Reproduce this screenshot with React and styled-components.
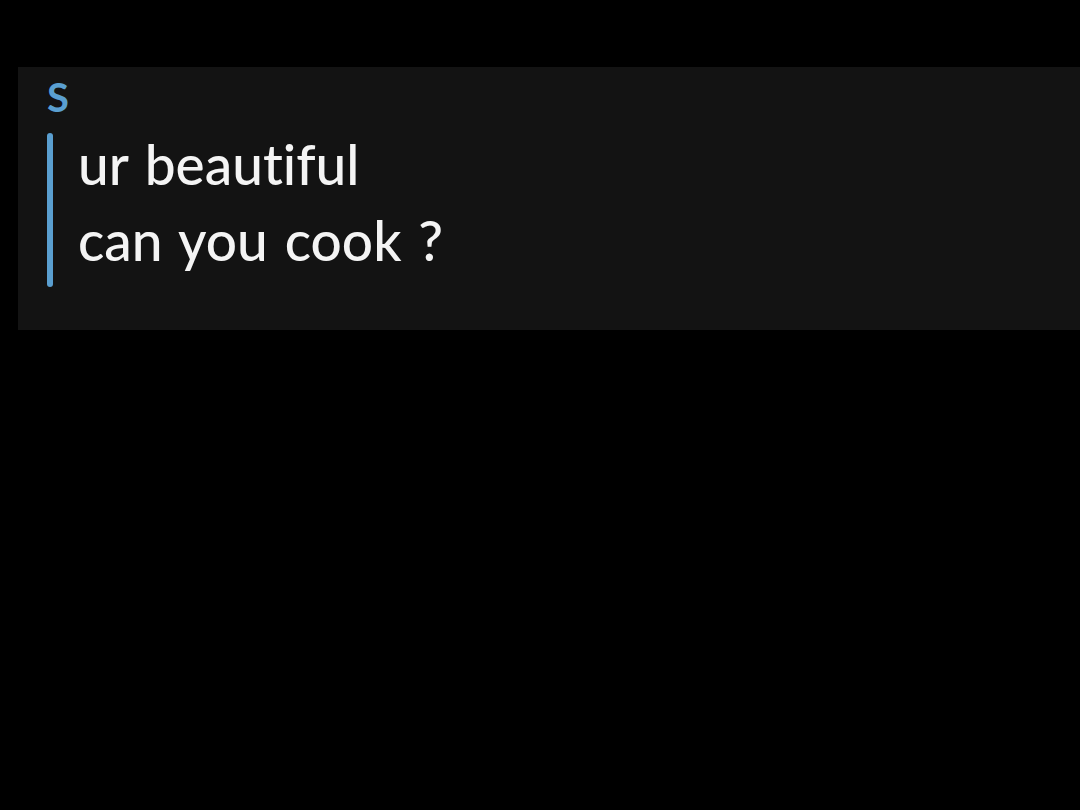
import React from "react";
import styled, { createGlobalStyle } from "styled-components";

const Global = createGlobalStyle`
  html, body {
    margin: 0;
    padding: 0;
    background: #000;
  }
  body {
    width: 1080px;
    height: 810px;
    overflow: hidden;
    font-family: "Lato", "Noto Sans", sans-serif;
  }
`;

const Screen = styled.div`
  width: 1080px;
  height: 810px;
  background: #000;
  padding-top: 67px;
  padding-left: 18px;
  box-sizing: border-box;
`;

const Chat = styled.section`
  height: 263px;
  background: #131313;
  box-sizing: border-box;
  padding: 10px 0 0 29px;
  display: flex;
  flex-direction: column;
`;

const Sender = styled.div`
  color: ${(p) => p.$color};
  font-family: "Lato", sans-serif;
  font-weight: 700;
  font-size: 40px;
  line-height: 40px;
  height: 40px;
`;

const Thread = styled.div`
  display: flex;
  gap: 25px;
  margin-top: 16px;
`;

const Bar = styled.div`
  width: 6px;
  height: 154px;
  border-radius: 3px;
  background: ${(p) => p.$color};
`;

const Lines = styled.div`
  display: flex;
  flex-direction: column;
  margin-top: -7px;
`;

const Line = styled.div`
  color: #f4f4f4;
  font-family: "Lato", sans-serif;
  font-weight: 500;
  font-size: 55px;
  line-height: 76px;
  word-spacing: 3px;
  font-variant-ligatures: none;
`;

const accent = "#5a9fd0";

export default function App() {
  const messages = ["ur beautiful", "can you cook ?"];
  return (
    <>
      <Global />
      <Screen>
        <Chat>
          <Sender $color={accent}>S</Sender>
          <Thread>
            <Bar $color={accent} />
            <Lines>
              {messages.map((m) => (
                <Line key={m}>{m}</Line>
              ))}
            </Lines>
          </Thread>
        </Chat>
      </Screen>
    </>
  );
}
